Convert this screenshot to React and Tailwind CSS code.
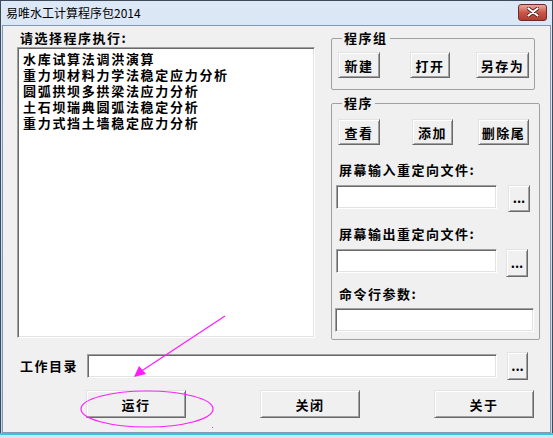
import React from 'react';

const cjk = "font-['Noto_Sans_CJK_SC','Liberation_Sans',sans-serif]";

const btn =
  'flex items-center justify-center bg-[#f0f0f0] border border-t-[#e3e3e3] border-l-[#e3e3e3] border-r-[#696969] border-b-[#696969] shadow-[inset_1px_1px_0_#ffffff,inset_-1px_-1px_0_#a0a0a0] text-[13px] font-bold tracking-[1.5px] text-black leading-none';

const field =
  'bg-white border border-t-[#a0a0a0] border-l-[#a0a0a0] border-r-white border-b-white shadow-[inset_1px_1px_0_#696969,inset_-1px_-1px_0_#e3e3e3]';

const programs = [
  '水库试算法调洪演算',
  '重力坝材料力学法稳定应力分析',
  '圆弧拱坝多拱梁法应力分析',
  '土石坝瑞典圆弧法稳定分析',
  '重力式挡土墙稳定应力分析',
];

const Label = ({ children, className = '' }) => (
  <div className={`h-[16px] leading-[16px] text-[13px] font-bold tracking-[1.5px] ${className}`}>{children}</div>
);

const Dots = ({ className = '' }) => (
  <button className={`${btn} tracking-normal pb-[2px] ${className}`}>...</button>
);

const GroupBox = ({ title, className = '', children }) => (
  <fieldset className={`border border-[#a0a0a0] rounded-[2px] pl-[6px] pr-[5px] ${className}`}>
    <legend className="ml-[4px] px-[2px] h-[16px] leading-[16px] text-[13px] font-bold tracking-[1.5px]">{title}</legend>
    {children}
  </fieldset>
);

export default function App() {
  return (
    <div className={`relative w-[553px] h-[438px] bg-[#d6e4f2] overflow-hidden text-black ${cjk}`}>
      <div className="w-[553px] h-[435px] flex flex-col border border-[#3c4a5c] border-b-[#2a3340] bg-gradient-to-b from-[#dce8f6] to-[#c2d5ec]">
        {/* title bar */}
        <div className="h-[24px] flex items-center justify-between pl-[5px] pr-[5px] shrink-0">
          <span className="text-[12px] leading-none text-black">易唯水工计算程序包2014</span>
          <div className="w-[29px] h-[17px] mb-[2px] rounded-[3px] border border-[#6e2a2a] bg-gradient-to-b from-[#e8a89c] via-[#c9574a] to-[#b53a2e] flex items-center justify-center">
            <svg width="12" height="10" viewBox="0 0 12 10">
              <path d="M1.5 1.5 L10.5 8.5 M10.5 1.5 L1.5 8.5" stroke="#4a1a14" strokeWidth="3.6" strokeLinecap="round" />
              <path d="M1.5 1.5 L10.5 8.5 M10.5 1.5 L1.5 8.5" stroke="#ffffff" strokeWidth="2.2" strokeLinecap="round" />
            </svg>
          </div>
        </div>

        {/* client area */}
        <div className="flex-1 mx-[1px] mb-[1px] bg-[#f0f0f0] border border-[#8398b4] flex flex-col">
          <div className="flex pl-[14px] pt-[4px] gap-[16px]">
            {/* program list */}
            <div className="w-[298px] flex flex-col">
              <Label className="pl-[3px]">请选择程序执行:</Label>
              <div className={`${field} mt-[1px] h-[291px] pt-[3px] pl-[5px]`}>
                {programs.map((p, i) => (
                  <div key={i} className="h-[16px] leading-[16px] text-[13px] font-bold tracking-[1.7px] whitespace-nowrap">
                    {p}
                  </div>
                ))}
              </div>
            </div>

            {/* right column */}
            <div className="w-[204px] flex flex-col">
              <GroupBox title="程序组" className="h-[60px]">
                <div className="flex mt-[6px]">
                  <button className={`${btn} w-[42px] h-[26px]`}>新建</button>
                  <button className={`${btn} w-[40px] h-[26px] ml-[30px]`}>打开</button>
                  <button className={`${btn} w-[53px] h-[26px] ml-[26px]`}>另存为</button>
                </div>
              </GroupBox>

              <GroupBox title="程序" className="h-[245px] mt-[5px]">
                <div className="flex mt-[8px]">
                  <button className={`${btn} w-[42px] h-[26px] border-black shadow-[inset_1px_1px_0_#ffffff,inset_-1px_-1px_0_#696969,inset_-2px_-2px_0_#a0a0a0]`}>查看</button>
                  <button className={`${btn} w-[41px] h-[26px] ml-[32px]`}>添加</button>
                  <button className={`${btn} w-[51px] h-[26px] ml-[25px]`}>删除尾</button>
                </div>

                <Label className="mt-[17px] pl-[1px]">屏幕输入重定向文件:</Label>
                <div className="flex items-start mt-[7px] pl-[0px]">
                  <div className={`${field} w-[161px] h-[24px] -ml-[2px]`} />
                  <Dots className="w-[22px] h-[27px] ml-[11px]" />
                </div>

                <Label className="mt-[14px] pl-[1px]">屏幕输出重定向文件:</Label>
                <div className="flex items-start mt-[7px]">
                  <div className={`${field} w-[161px] h-[24px] -ml-[2px]`} />
                  <Dots className="w-[22px] h-[28px] ml-[9px]" />
                </div>

                <Label className="mt-[9px] pl-[1px]">命令行参数:</Label>
                <div className={`${field} w-[199px] h-[24px] mt-[6px] -ml-[3px]`} />
              </GroupBox>
            </div>
          </div>

          {/* working directory */}
          <div className="flex items-start mt-[12px] pl-[17px]">
            <span className="w-[57px] mt-[6px] text-[13px] leading-[16px] font-bold tracking-[1.5px] whitespace-nowrap">工作目录</span>
            <div className={`${field} w-[410px] h-[24px] mt-[2px] ml-[10px]`} />
            <Dots className="w-[21px] h-[28px] ml-[10px]" />
          </div>

          {/* bottom buttons */}
          <div className="flex mt-[10px] pl-[83px] gap-[74px]">
            <button className={`${btn} w-[100px] h-[28px]`}>运行</button>
            <button className={`${btn} w-[100px] h-[28px]`}>关闭</button>
            <button className={`${btn} w-[100px] h-[28px]`}>关于</button>
          </div>
        </div>
      </div>
      <div className="absolute left-0 top-[433px] w-[553px] h-[2px] bg-[#35c3e6]" />

      {/* annotation overlay */}
      <svg className="absolute left-0 top-0 pointer-events-none" width="553" height="438">
        <line x1="225" y1="316" x2="140" y2="372" stroke="#ff1cff" strokeWidth="1.2" />
        <polygon points="134,377 139,366 146,374" fill="#ff1cff" />
        <ellipse cx="147" cy="409" rx="66" ry="18" fill="none" stroke="#ff1cff" strokeWidth="1.2" />
        <rect x="212" y="427" width="1" height="1" fill="#ff1cff" />
      </svg>
    </div>
  );
}
